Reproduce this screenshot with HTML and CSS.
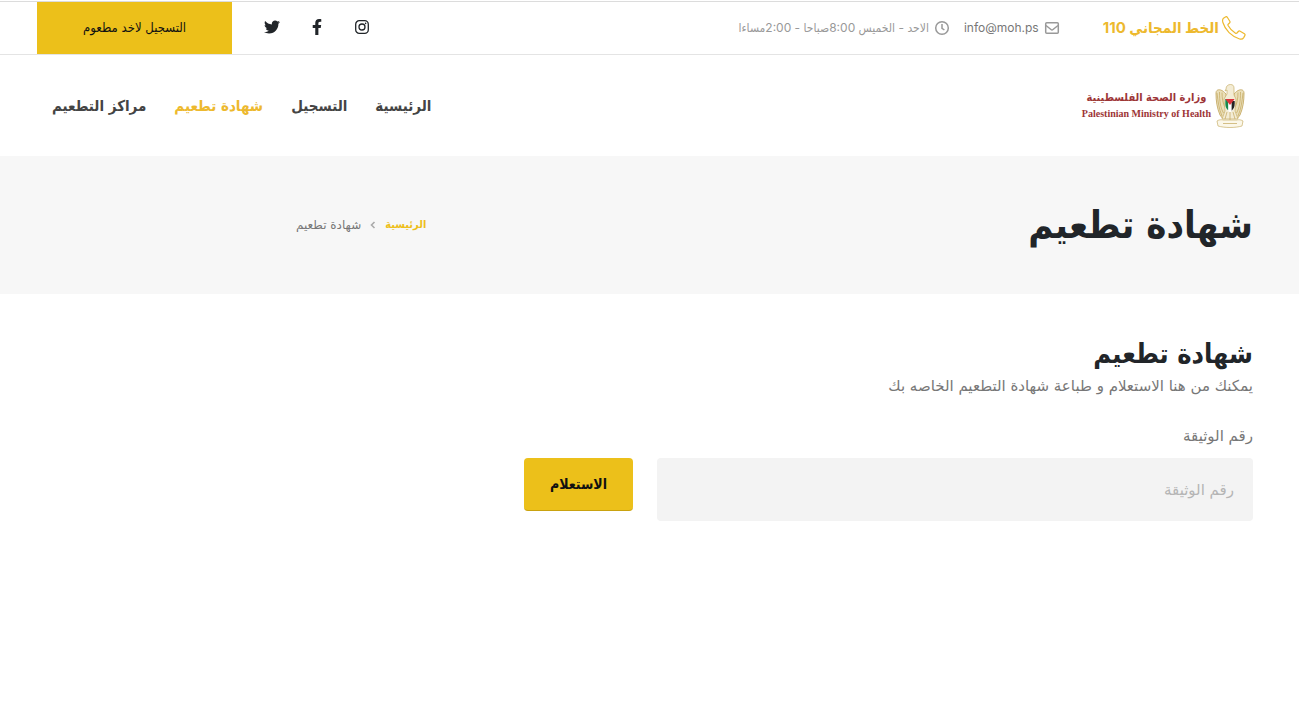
FILE: index.html
```html
<!DOCTYPE html>
<html lang="ar" dir="rtl">
<head>
<meta charset="utf-8">
<meta name="viewport" content="width=device-width, initial-scale=1">
<title>شهادة تطعيم</title>
<link rel="stylesheet" href="styles.css">
</head>
<body>
<header>
  <div class="topbar">
    <div class="container topbar-row">
      <div class="contact">
        <a class="hotline" href="#">
          <svg class="icon-phone" viewBox="0 0 24 24" aria-hidden="true"><path d="M1.500 2.200 3.400.9c.7-.5 1.400-.3 1.900.4l2.500 3.900c.4.700.3 1.300-.3 1.800L6.400 8c-.5.400-.6.900-.3 1.500 1.700 3.200 4.200 5.800 7.400 7.700.6.400 1.100.3 1.500-.2l1.300-1.500c.5-.6 1.200-.7 1.900-.3l4.200 2.500c.7.500.9 1.100.4 1.900l-1.100 2c-.9 1.500-2.300 1.900-4.100 1.400C9.600 20.400 3.100 14 .9 6.500.4 4.700.2 3.200 1.500 2.200z"/></svg>
          <span>الخط المجاني 110</span>
        </a>
        <a class="info mail" href="#">
          <svg class="icon-info" viewBox="0 0 16 16" aria-hidden="true"><rect x="1.700" y="2.700" width="12.600" height="10.600" rx="1"/><path d="m2 5.500 5 4c.6.500 1.400.5 2 0l5-4"/></svg>
          <span>info@moh.ps</span>
        </a>
        <span class="info hours">
          <svg class="icon-info" viewBox="0 0 16 16" aria-hidden="true"><circle cx="8" cy="8" r="6.300"/><path d="M8 4v4.300l2.400 1.700"/></svg>
          <span>الاحد - الخميس 8:00صباحا - 2:00مساءا</span>
        </span>
      </div>
      <div class="actions">
        <nav class="social" aria-label="التواصل الاجتماعي">
          <a href="#" aria-label="Instagram"><svg class="icon-social line" viewBox="0 0 16 16" aria-hidden="true"><rect x="1.700" y="1.700" width="12.600" height="12.600" rx="3.600"/><circle cx="8" cy="8" r="3"/><circle class="dot" cx="11.600" cy="4.400" r=".8"/></svg></a>
          <a href="#" aria-label="Facebook"><svg class="icon-social" viewBox="0 0 320 512" aria-hidden="true"><path d="M279.140 288l14.220-92.660h-88.910v-60.130c0-25.350 12.420-50.060 52.240-50.060h40.420V6.260S260.430 0 225.360 0c-73.220 0-121.080 44.380-121.080 124.720v70.620H22.890V288h81.390v224h100.170V288z"/></svg></a>
          <a href="#" aria-label="Twitter"><svg class="icon-social" viewBox="0 0 512 512" aria-hidden="true"><path d="M459.370 151.716c.325 4.548.325 9.097.325 13.645 0 138.720-105.583 298.558-298.558 298.558-59.452 0-114.680-17.219-161.137-47.106 8.447.974 16.568 1.299 25.340 1.299 49.055 0 94.213-16.568 130.274-44.832-46.132-.975-84.792-31.188-98.112-72.772 6.498.974 12.995 1.624 19.818 1.624 9.421 0 18.843-1.300 27.614-3.573-48.081-9.747-84.143-51.980-84.143-102.985v-1.299c13.969 7.797 30.214 12.670 47.431 13.319-28.264-18.843-46.781-51.005-46.781-87.391 0-19.492 5.197-37.360 14.294-52.954 51.655 63.675 129.300 105.258 216.365 109.807-1.624-7.797-2.599-15.918-2.599-24.040 0-57.828 46.782-104.934 104.934-104.934 30.213 0 57.502 12.670 76.670 33.137 23.715-4.548 46.456-13.320 66.599-25.340-7.798 24.366-24.366 44.833-46.132 57.827 21.117-2.273 41.584-8.122 60.426-16.243-14.292 20.791-32.161 39.308-52.628 54.253z"/></svg></a>
        </nav>
        <a class="register" href="#">التسجيل لاخد مطعوم</a>
      </div>
    </div>
  </div>
  <div class="container mainbar">
    <a class="logo" href="#">
      <svg class="emblem" viewBox="0 0 30 44" aria-hidden="true">
        <path class="wing" d="M11 10C6 4 1 5 1 9c0 8 1 15 4 22l3 4 3-6zM19 10c5-6 10-5 10-1 0 8-1 15-4 22l-3 4-3-6z"/>
        <path class="feather" d="M2 9c1 9 2 16 5 23M4.500 8c0 9 1 16 4 21M7 8.500c0 6 1 11 3 15M28 9c-1 9-2 16-5 23M25.500 8c0 9-1 16-4 21M23 8.500c0 6-1 11-3 15"/>
        <path class="body" d="M11 5c0-3 2-4.500 4.500-4.500S19 2 19 4v7l2 4-1 12 3 8H7l3-8-1-12 3-5V6l-2 1z"/>
        <path class="feather" d="M12 28l-2 7M15 28v8M18 28l2 7"/>
        <path class="shield" d="M10.300 15h9.400v5c0 4-2 6.500-4.700 8-2.700-1.500-4.700-4-4.700-8z"/>
        <path class="green" d="M10.300 15h3.100v11.500c-2-1.500-3.100-3.700-3.100-6.500z"/>
        <path class="white" d="M13.400 17h3.200v10l-1.600 1-1.600-1z"/>
        <path class="black" d="M16.600 17h3.100v3c0 3-1.100 5-3.100 6.700z"/>
        <path class="red" d="M10.300 15h9.400L15 21z"/>
        <path class="scroll" d="M2 37c3-2 6-1 6-1h14s3-1 6 1l-1 5c-7 2-17 2-24 0z"/>
        <path class="feather" d="M8 39.500h14"/>
      </svg>
      <span class="logo-text">
        <span class="logo-ar">وزارة الصحة الفلسطينية</span>
        <span class="logo-en" dir="ltr">Palestinian Ministry of Health</span>
      </span>
    </a>
    <nav class="menu" aria-label="القائمة الرئيسية">
      <a href="#">الرئيسية</a>
      <a href="#">التسجيل</a>
      <a class="active" href="#" aria-current="page">شهادة تطعيم</a>
      <a href="#">مراكز التطعيم</a>
    </nav>
  </div>
</header>
<section class="banner">
  <div class="container grid banner-row">
    <h1>شهادة تطعيم</h1>
    <nav class="crumbs" aria-label="مسار الصفحة">
      <a href="#">الرئيسية</a>
      <svg class="icon-sep" viewBox="0 0 6 8" aria-hidden="true"><path d="M4.500 1 1.500 4l3 3"/></svg>
      <span class="current">شهادة تطعيم</span>
    </nav>
  </div>
</section>
<main>
  <div class="container">
    <h2>شهادة تطعيم</h2>
    <p>يمكنك من هنا الاستعلام و طباعة شهادة التطعيم الخاصه بك</p>
    <form>
      <label for="doc">رقم الوثيقة</label>
      <div class="grid form-row">
        <input id="doc" type="text" placeholder="رقم الوثيقة">
        <button type="button">الاستعلام</button>
      </div>
    </form>
  </div>
</main>
</body>
</html>
```
FILE: styles.css
```css
* { box-sizing: border-box; }
body {
  margin: 0;
  background: #fff;
  color: #777;
  font-family: "DejaVu Sans", sans-serif;
  font-size: 15px;
  line-height: 24px;
}
a { color: inherit; text-decoration: none; }
svg { display: block; flex: none; }
h1, h2, p { margin: 0; }
h1, h2, .menu, .register, .logo-ar, .crumbs a, button { font-family: "DejaVu Sans Condensed", "DejaVu Sans", sans-serif; }
.container { padding: 0 46px 0 37px; }
.grid { display: grid; grid-template-columns: repeat(12, 1fr); column-gap: 24px; }

.topbar { margin-top: 1px; border-top: 1px solid #dcdcdc; border-bottom: 1px solid #e4e4e4; }
.topbar-row { display: flex; justify-content: space-between; min-height: 52px; }
.contact {
  display: flex;
  align-items: center;
  padding-right: 7px;
  font-family: Inter, "DejaVu Sans Condensed", sans-serif;
  white-space: nowrap;
}
.hotline { display: flex; align-items: center; gap: 3px; color: #edb92e; font-weight: 700; }
.icon-phone { width: 24px; height: 24px; fill: none; stroke: #edb92e; stroke-width: 1.2; }
.info { display: flex; align-items: center; gap: 5px; color: #999; font-size: 12px; }
.mail { margin-right: 43px; color: #777; }
.hours { margin-right: 14px; }
.icon-info { width: 16px; height: 16px; fill: none; stroke: #999; stroke-width: 1.5; }
.actions { display: flex; gap: 32px; }
.social { display: flex; align-items: center; gap: 29px; color: #212529; }
.social a { display: block; padding-bottom: 2px; }
.icon-social { width: 16px; height: 16px; fill: currentColor; }
.line { fill: none; stroke: currentColor; stroke-width: 1.3; }
.dot { fill: currentColor; stroke: none; }
.register {
  display: flex;
  align-items: center;
  justify-content: center;
  width: 195px;
  background: #ecc01a;
  color: #111;
  font-size: 13px;
}

.mainbar { display: flex; align-items: center; justify-content: space-between; min-height: 101px; }
.logo { display: flex; align-items: center; gap: 4px; padding-right: 8px; color: #9d3537; white-space: nowrap; }
.logo-text { display: flex; flex-direction: column; align-items: center; }
.logo-ar { font-size: 11px; font-weight: 700; line-height: 16px; }
.logo-en { font-family: "Liberation Serif", serif; font-size: 10px; font-weight: 700; line-height: 16px; }
.emblem { width: 30px; height: 44px; }
.wing { fill: #eadfb9; stroke: #cbb272; }
.feather { fill: none; stroke: #c3a65b; stroke-width: 0.7; }
.body { fill: #f3ecd5; stroke: #c9b06c; stroke-width: 0.7; }
.shield, .white { fill: #fff; }
.black { fill: #222; }
.green { fill: #168a4b; }
.red { fill: #d9343b; }
.scroll { fill: #fbf7e9; stroke: #c9b06c; stroke-width: 0.7; }
.menu { display: flex; gap: 28px; padding-left: 15px; color: #444; font-weight: 700; }
.active { color: #edb92e; }

.banner { background: #f7f7f7; }
.banner-row { align-items: center; min-height: 138px; }
h1 { grid-column: span 8; color: #212529; font-size: 38px; line-height: 56px; }
.crumbs { grid-column: span 4; display: flex; align-items: center; gap: 9px; }
.crumbs a { color: #edbf1c; font-size: 11px; font-weight: 700; }
.current { font-size: 12px; }
.icon-sep { width: 6px; height: 8px; fill: none; stroke: #aaa; stroke-width: 1.6; }

main { padding-top: 40px; }
h2 { color: #212529; font-size: 27px; line-height: 40px; }
form { margin-top: 26px; }
label { display: block; margin-bottom: 10px; }
.form-row { align-items: start; }
input {
  grid-column: span 6;
  height: 63px;
  padding: 0 19px;
  border: 0;
  border-radius: 4px;
  background: #f3f3f3;
  color: #777;
  font: inherit;
}
input::placeholder { color: #b5b5b5; opacity: 1; }
button {
  grid-column: span 6;
  justify-self: start;
  width: 109px;
  height: 53px;
  padding: 0;
  border: 0;
  border-bottom: 1px solid #c9a20f;
  border-radius: 4px;
  background: #ecc01a;
  color: #111;
  font-size: 14px;
  font-weight: 700;
}
```
